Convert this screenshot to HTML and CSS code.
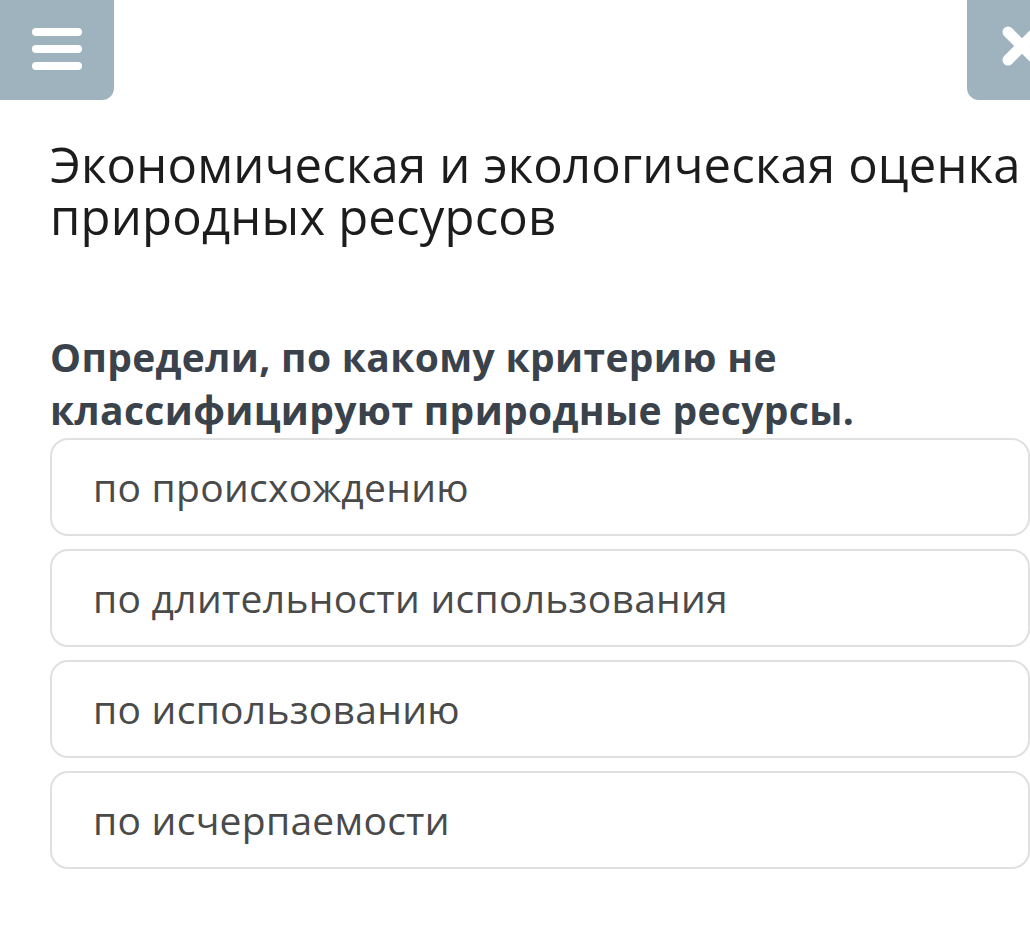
FILE: index.html
```html
<!DOCTYPE html>
<html lang="ru">
<head>
<meta charset="utf-8">
<link rel="stylesheet" href="styles.css">
</head>
<body>
<div class="page">
  <header class="topbar">
    <button class="btn btn-menu" aria-label="Меню">
      <svg width="52" height="44" viewBox="0 0 52 44">
        <rect x="1" y="1" width="50" height="8" rx="4" fill="#fff"/>
        <rect x="1" y="18" width="50" height="8" rx="4" fill="#fff"/>
        <rect x="1" y="35" width="50" height="8" rx="4" fill="#fff"/>
      </svg>
    </button>
    <button class="btn btn-close" aria-label="Закрыть">
      <svg width="40" height="40" viewBox="0 0 40 40">
        <path d="M6 6 L34 34 M34 6 L6 34" stroke="#fff" stroke-width="11" stroke-linecap="round"/>
      </svg>
    </button>
  </header>
  <main class="content">
    <h1 class="title">Экономическая и экологическая оценка природных ресурсов</h1>
    <p class="question">Определи, по какому критерию не классифицируют природные ресурсы.</p>
    <ul class="options">
      <li class="option">по происхождению</li>
      <li class="option">по длительности использования</li>
      <li class="option">по использованию</li>
      <li class="option">по исчерпаемости</li>
    </ul>
  </main>
</div>
</body>
</html>
```
FILE: styles.css
```css
html, body {
  margin: 0;
  padding: 0;
  background: #fff;
}
body {
  font-family: "Open Sans", "DejaVu Sans", sans-serif;
  width: 1030px;
  height: 926px;
  overflow: hidden;
}
.page {
  width: 1030px;
  overflow: hidden;
}
.topbar {
  display: flex;
  justify-content: space-between;
  height: 100px;
}
.btn {
  border: none;
  padding: 0;
  margin: 0;
  width: 114px;
  height: 100px;
  background: #9fb3bf;
  display: flex;
  align-items: center;
  justify-content: center;
  flex-shrink: 0;
}
.btn-menu {
  border-bottom-right-radius: 12px;
  padding-bottom: 12px;
}
.btn-menu svg {
  margin-top: 10px;
}
.btn-close {
  border-bottom-left-radius: 12px;
  margin-right: -51px;
  padding-right: 4px;
  padding-bottom: 8px;
}
.content {
  padding-left: 50px;
}
.title {
  margin: 38px 0 0 0;
  font-size: 49px;
  line-height: 52px;
  font-weight: 400;
  letter-spacing: 0.2px;
  color: #1c1c1c;
  width: 1000px;
}
.question {
  margin: 88px 0 0 0;
  font-size: 39px;
  line-height: 53px;
  font-weight: 700;
  letter-spacing: 0.35px;
  color: #3a424c;
  width: 900px;
}
.options {
  list-style: none;
  margin: 2px 0 0 0;
  padding: 0;
  display: flex;
  flex-direction: column;
  gap: 13px;
}
.option {
  box-sizing: border-box;
  width: 980px;
  height: 98px;
  border: 2px solid #e0e0e0;
  border-radius: 18px;
  padding-left: 41px;
  font-size: 39px;
  line-height: 94px;
  letter-spacing: 0.28px;
  color: #4a4a4a;
  background: #fff;
}
```
